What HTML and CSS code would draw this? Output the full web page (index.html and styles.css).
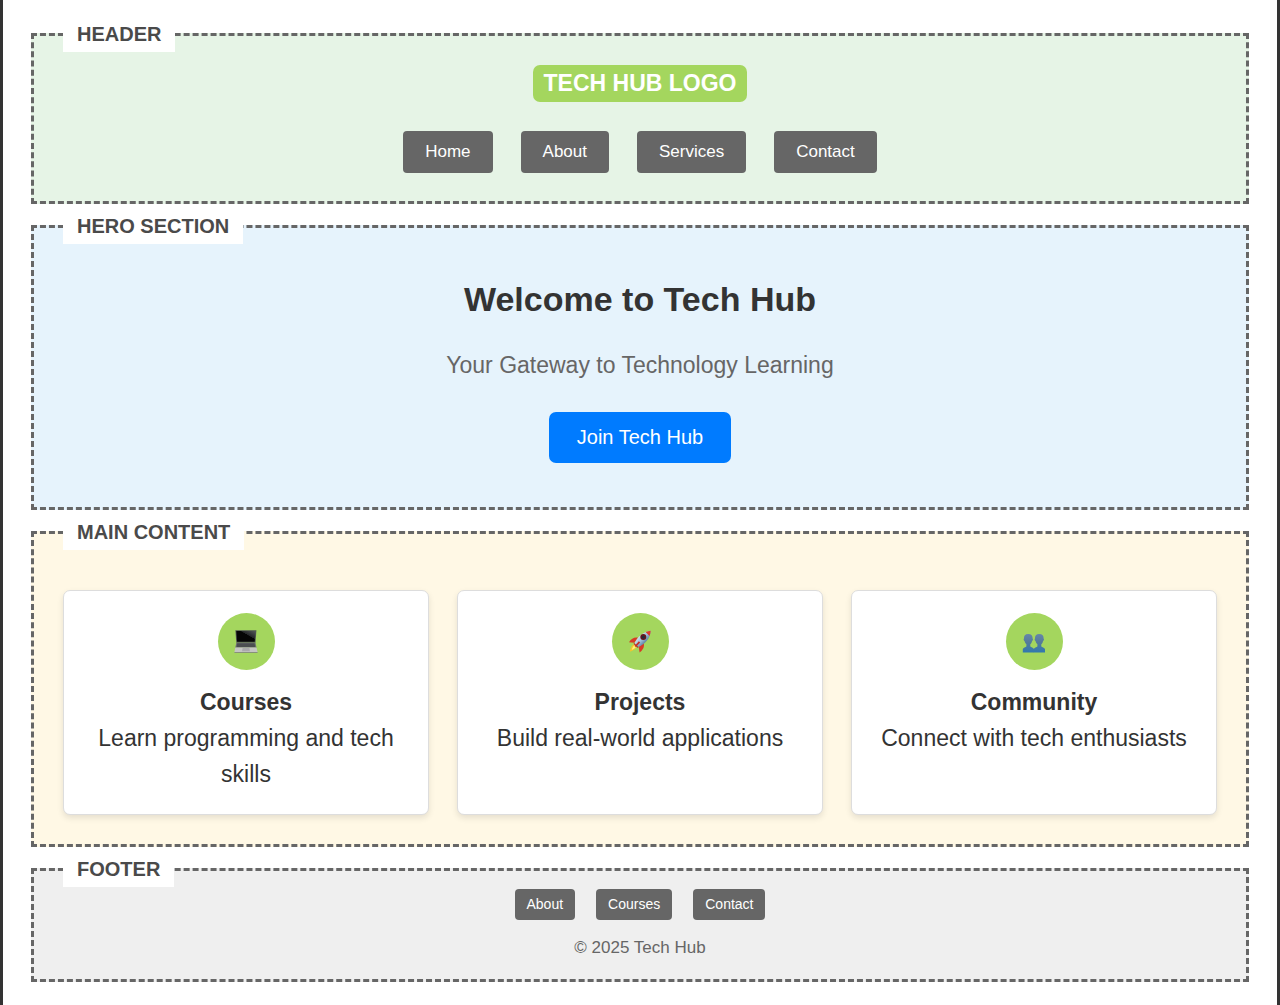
FILE: index.html
```html
<!DOCTYPE html>
<html lang="en">
<head>
<meta charset="utf-8">
<meta name="viewport" content="width=device-width, initial-scale=1">
<title>Tech Hub</title>
<link rel="stylesheet" href="styles.css">
</head>
<body>
<div class="page">
  <header class="section section-header">
    <span class="label">HEADER</span>
    <div class="logo">TECH HUB LOGO</div>
    <nav class="nav" aria-label="Main">
      <a class="nav-link" href="#home">Home</a>
      <a class="nav-link" href="#about">About</a>
      <a class="nav-link" href="#services">Services</a>
      <a class="nav-link" href="#contact">Contact</a>
    </nav>
  </header>

  <section class="section hero">
    <span class="label">HERO SECTION</span>
    <h1 class="hero-title">Welcome to Tech Hub</h1>
    <p class="hero-text">Your Gateway to Technology Learning</p>
    <button class="cta" type="button">Join Tech Hub</button>
  </section>

  <main class="section main">
    <span class="label">MAIN CONTENT</span>
    <div class="cards">
      <article class="card">
        <div class="card-icon">
          <svg class="icon" viewBox="0 0 24 24" aria-hidden="true">
            <defs>
              <linearGradient id="screen" x1="0" y1="1" x2="1" y2="0"><stop offset=".6" stop-color="#050505"/><stop offset=".62" stop-color="#242628"/><stop offset="1" stop-color="#55595b"/></linearGradient>
            </defs>
            <path d="M1.4 .3h21l-.9 12.400H2.300z" fill="#505552"/>
            <path d="M2.300 .9h19.200l-.8 10.900H3.100z" fill="url(#screen)"/>
            <path d="M2.300 12.700h19.200l1 5H1.300z" fill="#6d6f72"/>
            <path d="M3.200 13.500h17.400l.6 3.300H2.600z" fill="#3f4144"/>
            <path d="M2.800 14.600h18.200M2.600 15.700h18.600" stroke="#707276" stroke-width=".3"/>
            <path d="M1.300 17.500h21.200l1.100 4.800H.4z" fill="#c5c5c3"/>
            <path d="M8.600 18.100h6.800l.5 3.200H8z" fill="#aaa9ac"/>
            <path d="M.4 22h23.200v.7H.4z" fill="#77777a"/>
          </svg>
        </div>
        <h2 class="card-title">Courses</h2>
        <p class="card-text">Learn programming and tech skills</p>
      </article>
      <article class="card">
        <div class="card-icon">
          <svg class="icon" viewBox="0 0 24 24" aria-hidden="true">
            <defs>
              <linearGradient id="hull" x1="0" y1="0" x2="1" y2="1"><stop offset=".2" stop-color="#f0f3f8"/><stop offset=".5" stop-color="#9fc0dc"/><stop offset=".75" stop-color="#4b6f91"/></linearGradient>
            </defs>
            <path d="M5.800 14.300C3.500 15.500 2.600 18.500 1.800 21.800c3.300-1.200 5.900-2.500 6.900-5z" fill="#f5c52c"/>
            <path d="M6.300 15.500c-1.400 1-2 2.500-2.500 4.500 2-.8 3.400-1.800 4.200-3.500z" fill="#fff17a"/>
            <path d="M10 7.800C6.500 7 3.500 8.500 1 12.200l5.300.5z" fill="#d83a26"/>
            <path d="M15.700 13c1 3.800-.7 6.900-4.100 9.400l-.9-5.700z" fill="#d83a26"/>
            <path d="M5.500 13.700 9.800 18l1.200-1.700-3.800-3.900z" fill="#b82d22"/>
            <path d="M6.500 13.300C9.500 6.700 15 1.700 22.700.7 22.200 8.300 17.300 13.900 10.300 17.100z" fill="url(#hull)"/>
            <path d="M17.600 2c1.700-.7 3.400-1.200 5.100-1.300-.1 1.900-.6 3.600-1.200 5.200z" fill="#dc3b2b"/>
            <circle cx="15.300" cy="7.100" r="3" fill="#68171c"/>
            <circle cx="15.300" cy="7.100" r="1.700" fill="#262b3b"/>
            <path d="M11.500 11.900 7.300 16.500" stroke="#c72c24" stroke-width="1.800"/>
          </svg>
        </div>
        <h2 class="card-title">Projects</h2>
        <p class="card-text">Build real-world applications</p>
      </article>
      <article class="card">
        <div class="card-icon">
          <svg class="icon" viewBox="0 0 24 24" aria-hidden="true">
            <defs>
              <linearGradient id="people" x1="0" y1="0" x2="0" y2="1"><stop offset="0" stop-color="#6586aa"/><stop offset=".45" stop-color="#557b99"/><stop offset="1" stop-color="#3079b0"/></linearGradient>
            </defs>
            <path id="person" d="M6.200 4c-3 0-4.500 1.800-4.200 4.500-.6.200-.4 2 .5 2.500.4 1.500 1 2.600 1.900 3.300v2.100c-.7 1-3.300 1.100-3.600 2.600v3.400h11.200V19c-.5-1.500-3-1.600-3.700-2.600v-2.100c.9-.7 1.500-1.800 1.800-3.300.9-.5 1.200-2.300.5-2.500.3-2.700-1.300-4.500-4.400-4.500z" fill="url(#people)"/>
            <use href="#person" x="11"/>
          </svg>
        </div>
        <h2 class="card-title">Community</h2>
        <p class="card-text">Connect with tech enthusiasts</p>
      </article>
    </div>
  </main>

  <footer class="section footer">
    <span class="label">FOOTER</span>
    <nav class="footer-nav" aria-label="Footer">
      <a class="footer-link" href="#about">About</a>
      <a class="footer-link" href="#courses">Courses</a>
      <a class="footer-link" href="#contact">Contact</a>
    </nav>
    <p class="copyright">© 2025 Tech Hub</p>
  </footer>
</div>
</body>
</html>
```
FILE: styles.css
```css
* {
  box-sizing: border-box;
  margin: 0;
  padding: 0;
}

body {
  background: #fff;
  color: #333;
  font-family: "Liberation Sans", Arial, sans-serif;
  font-size: 23px;
  line-height: 36px;
}

.page {
  display: flex;
  flex-direction: column;
  gap: 21px;
  min-height: 100vh;
  padding: 33px 28px 23px;
  border: solid #333;
  border-width: 0 3px;
}

.section {
  position: relative;
  display: flex;
  flex-direction: column;
  align-items: center;
  border: 3px dashed #666;
  text-align: center;
}

/* Section name, sitting over the top border */
.label {
  position: absolute;
  top: -19px;
  left: 29px;
  padding: 0 14px;
  background: #fff;
  color: #4a4a4a;
  font-size: 20px;
  font-weight: bold;
  line-height: 35px;
}

.section-header {
  gap: 29px;
  padding: 29px 29px 28px;
  background: #e6f4e6;
}

.logo {
  padding: 0 11px;
  border-radius: 7px;
  background: #a4d65e;
  color: #fff;
  font-weight: bold;
  line-height: 37px;
}

.nav {
  display: flex;
  flex-wrap: wrap;
  justify-content: center;
  gap: 28px;
}

.nav-link {
  padding: 0 22px;
  border-radius: 4px;
  background: #666;
  color: #fff;
  font-size: 17px;
  line-height: 42px;
  text-decoration: none;
}

.hero {
  padding: 42px 29px 44px;
  background: #e6f3fc;
}

.hero-title {
  margin-bottom: 19px;
  font-size: 34px;
  line-height: 58px;
}

.hero-text {
  margin-bottom: 29px;
  color: #666;
}

.cta {
  padding: 0 28px;
  border: 0;
  border-radius: 7px;
  background: #007bff;
  color: #fff;
  font-family: inherit;
  font-size: 20px;
  line-height: 51px;
}

.main {
  padding: 56px 29px 29px;
  background: #fff8e5;
}

.cards {
  display: grid;
  grid-template-columns: repeat(3, 1fr);
  gap: 28px;
  width: 100%;
}

.card {
  padding: 22px;
  border: 1px solid #ddd;
  border-radius: 7px;
  background: #fff;
  box-shadow: 0 3px 6px rgba(0, 0, 0, 0.1);
}

.card-icon {
  display: flex;
  align-items: center;
  justify-content: center;
  width: 57px;
  height: 57px;
  margin: 0 auto 14px;
  border-radius: 50%;
  background: #a4d65e;
}

.icon {
  width: 24px;
  height: 24px;
}

.card-title {
  font-size: 23px;
}

.footer {
  gap: 14px;
  padding: 18px 29px;
  background: #efefef;
}

.footer-nav {
  display: flex;
  flex-wrap: wrap;
  justify-content: center;
  gap: 21px;
}

.footer-link {
  padding: 0 12px;
  border-radius: 4px;
  background: #666;
  color: #fff;
  font-size: 14px;
  line-height: 31px;
  text-decoration: none;
}

.copyright {
  color: #666;
  font-size: 17px;
  line-height: 27px;
}
```
